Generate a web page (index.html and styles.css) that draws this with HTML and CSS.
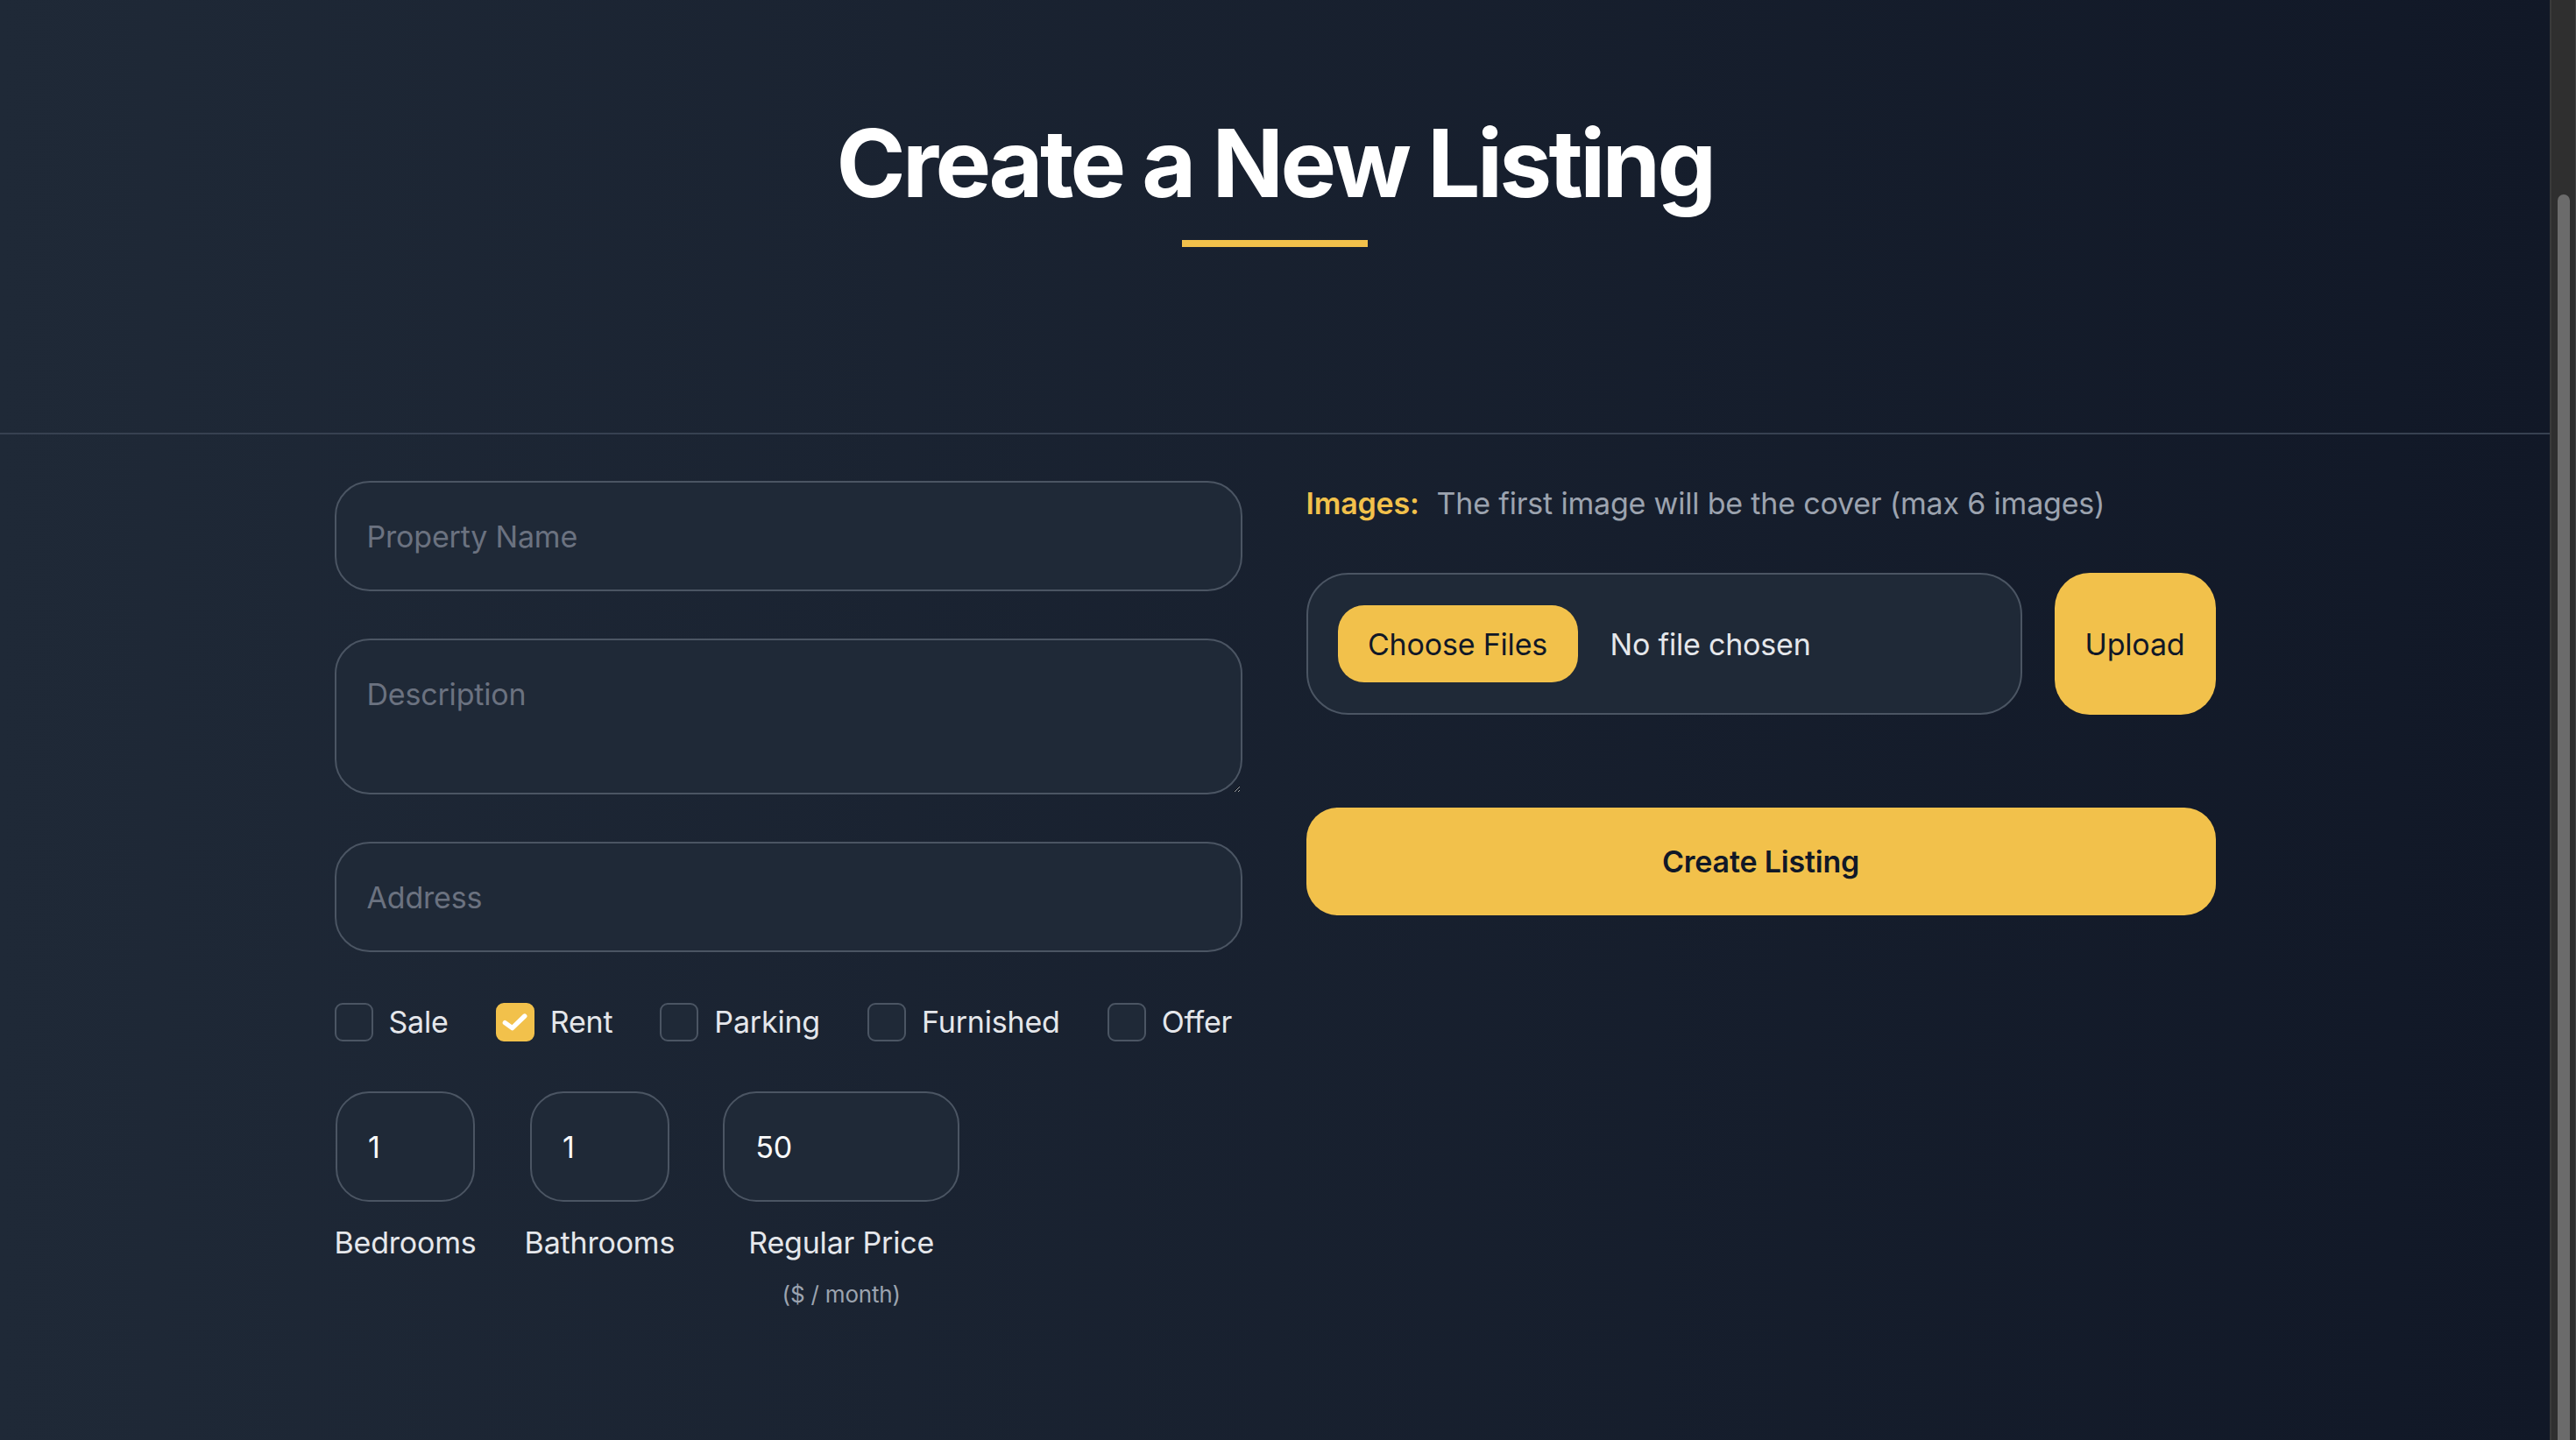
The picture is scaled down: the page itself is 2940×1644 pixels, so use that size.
FILE: index.html
```html
<!DOCTYPE html>
<html lang="en">
<head>
<meta charset="utf-8">
<title>Create a New Listing</title>
<link rel="stylesheet" href="styles.css">
</head>
<body>
<div class="app">
  <main class="page">
    <header class="hero">
      <h1 class="hero-title">Create a New Listing</h1>
      <div class="hero-bar"></div>
    </header>
    <form class="listing-form">
      <div class="col col-left">
        <input class="field" type="text" placeholder="Property Name">
        <textarea class="field field-area" placeholder="Description"></textarea>
        <input class="field" type="text" placeholder="Address">
        <div class="checks">
          <label class="check"><input type="checkbox" class="check-input"><span class="check-box"></span><span>Sale</span></label>
          <label class="check"><input type="checkbox" class="check-input" checked><span class="check-box is-on"><svg class="check-mark" viewBox="0 0 24 24"><path d="M5 12.4 L10 16 L18.5 7.8"/></svg></span><span>Rent</span></label>
          <label class="check"><input type="checkbox" class="check-input"><span class="check-box"></span><span>Parking</span></label>
          <label class="check"><input type="checkbox" class="check-input"><span class="check-box"></span><span>Furnished</span></label>
          <label class="check"><input type="checkbox" class="check-input"><span class="check-box"></span><span>Offer</span></label>
        </div>
        <div class="numbers">
          <div class="num">
            <input class="num-input" type="number" value="1">
            <span class="num-label">Bedrooms</span>
          </div>
          <div class="num">
            <input class="num-input" type="number" value="1">
            <span class="num-label">Bathrooms</span>
          </div>
          <div class="num">
            <input class="num-input num-wide" type="number" value="50">
            <span class="num-label">Regular Price</span>
            <span class="num-sub">($ / month)</span>
          </div>
        </div>
      </div>
      <div class="col col-right">
        <p class="images-note"><span class="images-key">Images:</span><span>The first image will be the cover (max 6 images)</span></p>
        <div class="upload-row">
          <label class="file-box">
            <input type="file" class="file-native" multiple>
            <span class="file-btn">Choose Files</span>
            <span class="file-status">No file chosen</span>
          </label>
          <button type="button" class="upload-btn">Upload</button>
        </div>
        <button type="submit" class="submit-btn">Create Listing</button>
      </div>
    </form>
  </main>
  <div class="scrollbar"><div class="scroll-thumb"></div></div>
</div>
</body>
</html>
```

FILE: styles.css
```css
html, body {
  margin: 0;
  padding: 0;
  height: 100%;
  overflow: hidden;
}

body {
  font-family: Inter, "Noto Sans", "Liberation Sans", sans-serif;
  color: #e5e7eb;
  letter-spacing: -0.012em;
}

.app {
  display: flex;
  height: 100vh;
}

.page {
  flex: 1;
  min-width: 0;
  background: linear-gradient(to right, #1f2937, #111827);
  overflow: hidden;
}

/* Header */
.hero {
  box-sizing: border-box;
  height: 496px;
  padding-top: 128px;
  border-bottom: 2px solid #374151;
  display: flex;
  flex-direction: column;
  align-items: center;
}

.hero-title {
  margin: 0;
  font-size: 107px;
  line-height: 1.1;
  font-weight: 700;
  color: #ffffff;
  letter-spacing: -0.034em;
}

.hero-bar {
  width: 212px;
  height: 8px;
  margin-top: 28px;
  background: #f2c14b;
}

/* Form */
.listing-form {
  display: grid;
  grid-template-columns: 1036px 1038px;
  column-gap: 73px;
  justify-content: center;
  padding-top: 53px;
}

.col {
  display: flex;
  flex-direction: column;
}

.col-left {
  gap: 54px;
}

.field {
  display: block;
  box-sizing: border-box;
  width: 100%;
  height: 126px;
  margin: 0;
  padding: 0 35px;
  border: 2px solid #4b5563;
  border-radius: 40px;
  background: #1f2937;
  color: #f3f4f6;
  font-family: inherit;
  font-size: 34px;
  line-height: 1.5;
  letter-spacing: inherit;
  outline: none;
}

.field::placeholder {
  color: #6b7280;
  opacity: 1;
}

.field-area {
  height: 178px;
  padding: 36px 35px;
  resize: vertical;
}

/* Checkboxes */
.checks {
  display: flex;
  align-items: center;
  gap: 54px;
}

.check {
  display: flex;
  align-items: center;
  gap: 18px;
  font-size: 34px;
  line-height: 51px;
  color: #e5e7eb;
}

.check-input {
  display: none;
}

.check-box {
  box-sizing: border-box;
  width: 44px;
  height: 44px;
  border: 2px solid #4b5563;
  border-radius: 9px;
  background: #1f2937;
  display: flex;
  align-items: center;
  justify-content: center;
}

.check-box.is-on {
  background: #f2c14b;
  border-color: #f2c14b;
}

.check-mark {
  width: 44px;
  height: 44px;
  fill: none;
  stroke: #ffffff;
  stroke-width: 3.2;
  stroke-linecap: round;
  stroke-linejoin: round;
}

/* Numbers */
.numbers {
  display: flex;
  align-items: flex-start;
  gap: 55px;
}

.num {
  display: flex;
  flex-direction: column;
  align-items: center;
}

.num-input {
  box-sizing: border-box;
  width: 159px;
  height: 126px;
  margin: 0;
  padding: 0 35px;
  border: 2px solid #4b5563;
  border-radius: 38px;
  background: #1f2937;
  color: #f9fafb;
  font-family: inherit;
  font-size: 34px;
  letter-spacing: inherit;
  outline: none;
  -moz-appearance: textfield;
  appearance: textfield;
}

.num-input::-webkit-inner-spin-button,
.num-input::-webkit-outer-spin-button {
  -webkit-appearance: none;
  margin: 0;
}

.num-wide {
  width: 270px;
}

.num-label {
  margin-top: 21px;
  font-size: 34px;
  line-height: 51px;
  color: #e5e7eb;
}

.num-sub {
  margin-top: 15px;
  font-size: 26px;
  line-height: 38px;
  color: #9ca3af;
}

/* Right column */
.images-note {
  margin: 0;
  display: flex;
  gap: 20px;
  white-space: nowrap;
  font-size: 34px;
  line-height: 51px;
  color: #9ca3af;
}

.images-key {
  color: #f2c14b;
  font-weight: 600;
}

.upload-row {
  margin-top: 54px;
  display: flex;
  gap: 37px;
  height: 162px;
}

.file-box {
  flex: 0 0 817px;
  box-sizing: border-box;
  display: flex;
  align-items: center;
  gap: 37px;
  padding: 0 34px;
  border: 2px solid #4b5563;
  border-radius: 48px;
  background: #1f2937;
}

.file-native {
  display: none;
}

.file-btn {
  width: 274px;
  height: 88px;
  border-radius: 30px;
  background: #f2c14b;
  color: #111827;
  display: flex;
  align-items: center;
  justify-content: center;
  font-size: 34px;
}

.file-status {
  font-size: 34px;
  color: #e5e7eb;
}

.upload-btn {
  flex: 1;
  margin: 0;
  border: none;
  border-radius: 40px;
  background: #f2c14b;
  color: #111827;
  font-family: inherit;
  font-size: 34px;
  letter-spacing: inherit;
  cursor: pointer;
}

.submit-btn {
  margin-top: 106px;
  width: 100%;
  height: 123px;
  border: none;
  border-radius: 36px;
  background: #f2c14b;
  color: #111827;
  font-family: inherit;
  font-size: 34px;
  font-weight: 600;
  letter-spacing: inherit;
  cursor: pointer;
}

/* Fake scrollbar */
.scrollbar {
  box-sizing: border-box;
  width: 30px;
  flex: 0 0 30px;
  display: flex;
  flex-direction: column;
  padding: 222px 6px 0 7px;
  background: #2f2f2f;
  border-left: 2px solid #3a3a3a;
  border-right: 1px solid #444444;
}

.scroll-thumb {
  flex: 1;
  border-radius: 8px 8px 0 0;
  background: #6b6b6b;
}
```
